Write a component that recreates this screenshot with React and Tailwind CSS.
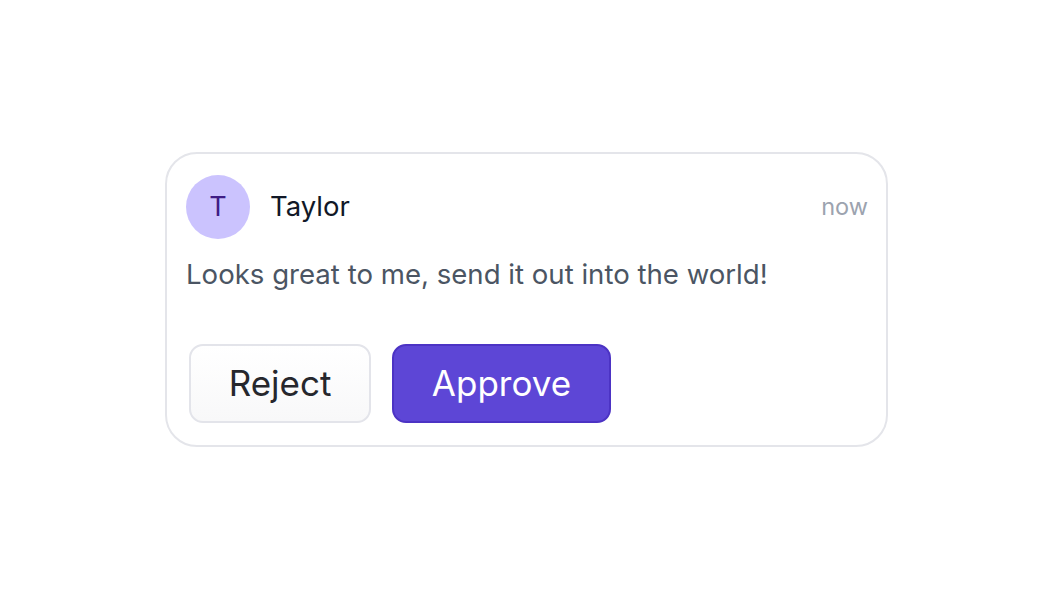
import React from "react";

const ApprovalCard = () => {
  return (
    <div className="w-[723px] rounded-[32px] border-2 border-[#e4e5ea] bg-white pl-[19px] pr-[18px] pt-[21px] pb-[22px]">
      <div className="flex items-center justify-between">
        <div className="flex items-center gap-[20px]">
          <div className="w-16 h-16 rounded-full bg-[#cbc3fe] flex items-center justify-center text-[27px] text-[#3f1d86]">
            T
          </div>
          <span className="text-[27.5px] text-[#111827]">Taylor</span>
        </div>
        <span className="text-[23.5px] text-[#9ca3af]">now</span>
      </div>
      <p className="mt-[15px] text-[27.6px] leading-[40px] text-[#4b5563]">
        Looks great to me, send it out into the world!
      </p>
      <div className="mt-[50px] flex gap-[21px] pl-[3px]">
        <button className="h-[79px] w-[182px] rounded-[14px] border-2 border-[#e3e4ea] bg-gradient-to-b from-white to-[#f8f8f9] text-[35px] text-[#26272d]">
          Reject
        </button>
        <button className="h-[79px] w-[219px] rounded-[14px] border-2 border-[#4c33c4] bg-[#5d46d6] text-[35px] text-white">
          Approve
        </button>
      </div>
    </div>
  );
};

export default function App() {
  return (
    <div
      className="w-[1054px] h-[600px] bg-white flex items-start pt-[152px] pl-[165px]"
      style={{ fontFamily: "Inter, 'Noto Sans', sans-serif" }}
    >
      <ApprovalCard />
    </div>
  );
}
